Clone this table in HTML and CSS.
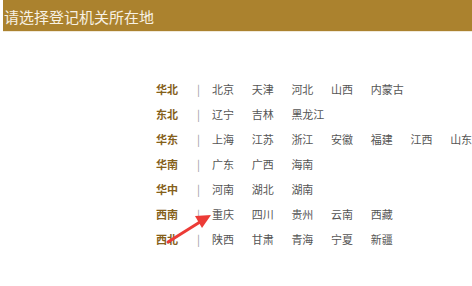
FILE: index.html
```html
<!DOCTYPE html>
<html lang="zh">
<head>
<meta charset="utf-8">
<link rel="stylesheet" href="styles.css">
</head>
<body>
<div class="header">请选择登记机关所在地</div>
<div class="regions">
  <div class="row"><span class="label">华北</span><span class="sep">|</span><span class="item">北京</span><span class="item">天津</span><span class="item">河北</span><span class="item">山西</span><span class="item">内蒙古</span></div>
  <div class="row"><span class="label">东北</span><span class="sep">|</span><span class="item">辽宁</span><span class="item">吉林</span><span class="item">黑龙江</span></div>
  <div class="row"><span class="label">华东</span><span class="sep">|</span><span class="item">上海</span><span class="item">江苏</span><span class="item">浙江</span><span class="item">安徽</span><span class="item">福建</span><span class="item">江西</span><span class="item">山东</span></div>
  <div class="row"><span class="label">华南</span><span class="sep">|</span><span class="item">广东</span><span class="item">广西</span><span class="item">海南</span></div>
  <div class="row"><span class="label">华中</span><span class="sep">|</span><span class="item">河南</span><span class="item">湖北</span><span class="item">湖南</span></div>
  <div class="row"><span class="label">西南</span><span class="sep">|</span><span class="item">重庆</span><span class="item">四川</span><span class="item">贵州</span><span class="item">云南</span><span class="item">西藏</span></div>
  <div class="row"><span class="label">西北</span><span class="sep">|</span><span class="item">陕西</span><span class="item">甘肃</span><span class="item">青海</span><span class="item">宁夏</span><span class="item">新疆</span></div>
  <svg class="arrow" width="60" height="50" viewBox="0 0 60 50">
    <line x1="8" y1="42" x2="40" y2="22" stroke="#ec3b36" stroke-width="3" stroke-linecap="round"/>
    <polygon points="51,15 35,16 42,28" fill="#ec3b36"/>
  </svg>
</div>
</body>
</html>
```
FILE: styles.css
```css
html, body {
  margin: 0;
  padding: 0;
  background: #fff;
  overflow: hidden;
}
body {
  font-family: "Noto Sans CJK SC", "Microsoft YaHei", sans-serif;
}
.header {
  margin-left: 3px;
  height: 31px;
  line-height: 33px;
  padding-left: 1px;
  background: #ab822e;
  color: #f7f1e4;
  font-size: 15px;
  border-bottom: 1px solid #f1e9da;
  white-space: nowrap;
}
.regions {
  position: relative;
  margin-top: 44px;
  padding-left: 156px;
}
.row {
  display: flex;
  align-items: center;
  height: 25px;
  font-size: 11px;
  white-space: nowrap;
}
.label {
  width: 41px;
  flex: none;
  color: #85601a;
  font-weight: bold;
}
.sep {
  width: 15px;
  flex: none;
  color: #999;
}
.item {
  width: 39.7px;
  flex: none;
  color: #555;
}
.arrow {
  position: absolute;
  left: 160px;
  top: 124px;
}
```
